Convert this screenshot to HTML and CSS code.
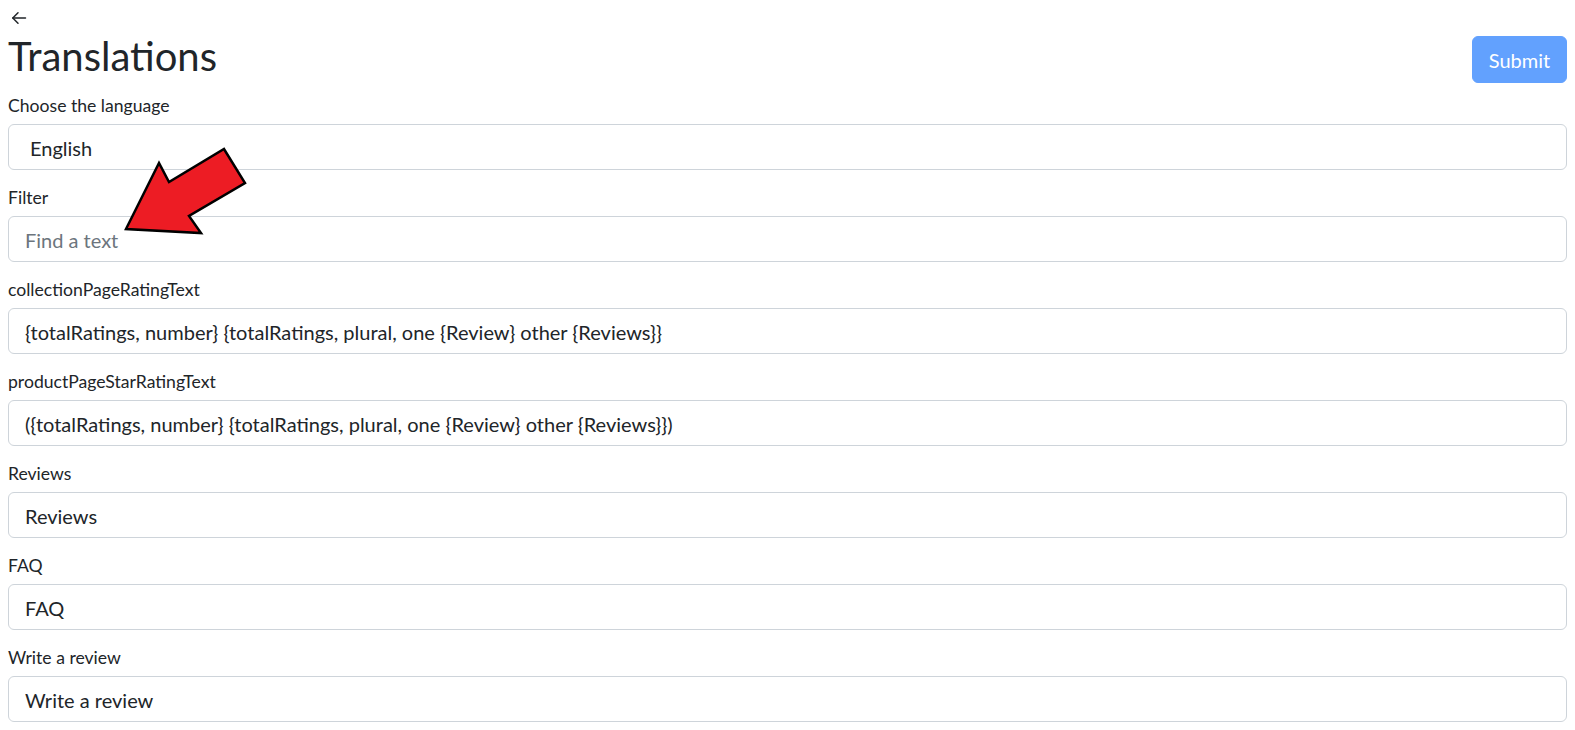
FILE: index.html
```html
<!DOCTYPE html>
<html lang="en">
<head>
<meta charset="utf-8">
<title>Translations</title>
<link rel="stylesheet" href="styles.css">
</head>
<body>
<div class="page">
  <div class="back">
    <svg width="16" height="16" viewBox="0 0 16 16" fill="none" stroke="#212529" stroke-width="1.5" stroke-linecap="round" stroke-linejoin="round"><path d="M14.5 8H1.8"/><path d="M7 2.8L1.8 8L7 13.2"/></svg>
  </div>
  <div class="header">
    <h1 class="title">Translations</h1>
    <button class="btn-submit" disabled>Submit</button>
  </div>
  <form class="form">
    <div class="group">
      <label class="label">Choose the language</label>
      <div class="select">English</div>
    </div>
    <div class="group">
      <label class="label">Filter</label>
      <input class="input" type="text" placeholder="Find a text">
    </div>
    <div class="group">
      <label class="label">collectionPageRatingText</label>
      <input class="input" type="text" value="{totalRatings, number} {totalRatings, plural, one {Review} other {Reviews}}">
    </div>
    <div class="group">
      <label class="label">productPageStarRatingText</label>
      <input class="input" type="text" value="({totalRatings, number} {totalRatings, plural, one {Review} other {Reviews}})">
    </div>
    <div class="group">
      <label class="label">Reviews</label>
      <input class="input" type="text" value="Reviews">
    </div>
    <div class="group">
      <label class="label">FAQ</label>
      <input class="input" type="text" value="FAQ">
    </div>
    <div class="group">
      <label class="label">Write a review</label>
      <input class="input" type="text" value="Write a review">
    </div>
  </form>
  <svg class="arrow" width="132" height="100" viewBox="0 0 132 100"><polygon points="6,89 39,23 49,42 104,9 125,43 69,76 81,93" fill="#ed1c24" stroke="#000" stroke-width="2.5" stroke-linejoin="miter"/></svg>
</div>
</body>
</html>
```

FILE: styles.css
```css
* { box-sizing: border-box; }
html, body { margin: 0; padding: 0; background: #fff; }
body {
  font-family: "Lato", "Noto Sans", sans-serif;
  color: #212529;
  font-size: 16px;
}
.page { position: relative; padding: 0 8px; }
.back { height: 32px; padding-top: 4px; display: flex; align-items: center; padding-left: 3px; }
.header { display: flex; justify-content: space-between; align-items: flex-start; height: 62px; }
.title { margin: 0; font-size: 40px; font-weight: 400; line-height: 48px; }
.btn-submit {
  font-family: inherit; font-size: 20px; color: #fff;
  background: #62a1fe; border: 1px solid #62a1fe; border-radius: 6px;
  width: 95px; height: 47px; padding: 0; margin-top: 4px;
}
.form { display: flex; flex-direction: column; gap: 16px; }
.group { display: flex; flex-direction: column; }
.label { font-size: 17.6px; line-height: 24px; margin-bottom: 6px; }
.input, .select {
  font-family: inherit; font-size: 20px; color: #212529;
  height: 46px; width: 100%; padding: 2px 16px 0 16px;
  border: 1px solid #ced4da; border-radius: 6px; background: #fff;
  display: flex; align-items: center;
}
.select { padding-left: 21px; }
.input::placeholder { color: #6c757d; }
.arrow { position: absolute; left: 120px; top: 140px; }
```
